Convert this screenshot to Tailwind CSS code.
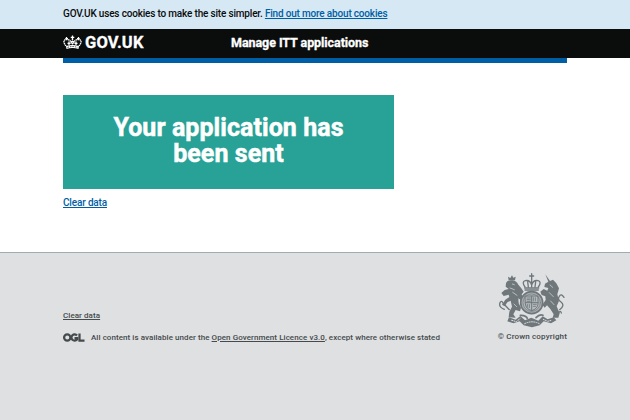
<!DOCTYPE html>
<html lang="en">
<head>
<meta charset="utf-8">
<title>Manage ITT applications</title>
<script src="https://cdn.jsdelivr.net/npm/@tailwindcss/browser@4"></script>
</head>
<body class="bg-white font-['Roboto','Liberation_Sans',sans-serif] text-[#0b0c0c] h-[420px] overflow-hidden flex flex-col">
<div class="h-[29px] shrink-0 bg-[#d5e8f3] px-[63px] pt-[6px] text-[10px] leading-[15px] font-medium whitespace-nowrap">
<span class="tracking-[-0.18px]">GOV.UK uses cookies to make the site simpler. <a class="text-[#005ea5] underline" href="#">Find out more about cookies</a></span>
</div>
<header class="h-[29px] shrink-0 bg-[#0b0c0c] px-[63px] pb-[2px] flex items-center text-white whitespace-nowrap">
<div class="w-[168px] flex items-center gap-[3px]">
<svg class="w-[19px] h-[16px]" viewBox="0 0 38 32" fill="none" stroke="#fff">
<path d="M7 28Q19 24 31 28L32 22Q19 18 6 22Z" fill="#fff" stroke="none"/>
<path d="M9 25Q19 21 29 25" stroke="#0b0c0c" stroke-width="1.5" stroke-dasharray="3 2"/>
<path d="M6 22L2 16Q1 9 7 9Q15 9 17 17M32 22L36 16Q37 9 31 9Q23 9 21 17M19 7V20" stroke-width="2.7" stroke-dasharray="3 1"/>
<path d="M19 1V9M15.500 4.500H22.500M7 4V10M4.500 7H10M31 4V10M28 7H33.500M12 13V20M9 16.500H15M26 13V20M23 16.500H29M16 13H22" stroke-width="2.500"/>
</svg>
<span class="text-[16.5px] leading-[20px] font-bold tracking-[0.15px] [-webkit-text-stroke:0.3px_white]">GOV.UK</span>
</div>
<span class="text-[12.5px] leading-[20px] font-bold tracking-[-0.06px] [-webkit-text-stroke:0.3px_white]">Manage ITT applications</span>
</header>
<div class="mx-[63px] h-[5px] shrink-0 bg-[#005ea5]"></div>
<main class="px-[63px] pt-[31.5px] h-[189px] shrink-0">
<div class="w-[331px] h-[94.5px] bg-[#28a197] pt-[20px] text-center text-white">
<h1 class="text-[25px] leading-[26px] font-bold tracking-[0.06px] [-webkit-text-stroke:0.5px_white]">Your application has<br>been sent</h1>
</div>
<a class="inline-block mt-[6px] text-[10px] leading-[15px] font-medium tracking-[-0.16px] text-[#005ea5] underline" href="#">Clear data</a>
</main>
<footer class="grow bg-[#dee0e2] border-t border-[#a1acb2] px-[63px] pt-[20px] flex justify-between text-[#454a4c] text-[8px] leading-[10px] font-medium whitespace-nowrap">
<div class="pt-[38px]">
<a class="block underline tracking-[0.06px]" href="#">Clear data</a>
<div class="mt-[11px] flex items-center gap-[6px]">
<svg class="w-[22px] h-[9px]" viewBox="0 0 44 18" fill="none" stroke="#454a4c" stroke-width="4.5"><circle cx="8.5" cy="9" r="6.3"/><path d="M28 5A6.3 6.3 0 1 0 28 13V10H23M33 1V15H43"/></svg>
<span class="pt-px tracking-[0.065px]">All content is available under the <a class="underline" href="#">Open Government Licence v3.0</a>, except where otherwise stated</span>
</div>
</div>
<div class="flex flex-col items-end">
<svg class="w-[69px] h-[55px]" viewBox="24 24 207 165" fill="none" stroke="#6f777b" stroke-linecap="round" stroke-linejoin="round">
<g fill="#6f777b" stroke="none">
<path d="M56 46L54 35L61 39L66 31L70 38L77 35L75 46Z"/>
<path d="M48 54Q53 44 68 46Q80 48 85 59L94 70L101 80L95 88L98 99L93 106L85 100L86 115L93 128L90 139L77 135L70 148L77 158L56 157L58 140L66 125L62 107L52 112L44 124L36 119L46 104L58 96L56 89L41 93L34 84L44 75L56 72L47 65Z"/>
<path d="M166 28L180 48L189 44L199 55L207 70L202 88L207 108L200 124L209 145L205 158L188 158L191 148L181 132L171 121L164 128L157 119L167 105L166 94L155 90L151 80L161 72L172 77L175 69L163 66L165 56L175 50Z"/>
<path d="M57 157L77 164L91 153L105 166L124 158L145 167L158 154L173 163L191 157L199 166L183 175L161 169L149 181L126 187L101 181L89 169L70 175L52 169Z"/>
</g>
<path d="M43 133Q25 126 30 113Q34 105 39 114Q48 124 58 134M209 134Q226 121 213 111Q201 103 208 94Q213 84 222 97M205 145Q211 134 214 144" stroke-width="4"/>
<path d="M125 26V46M119 33H131M105 66Q94 50 106 47Q120 44 125 60Q130 44 144 47Q156 50 145 66M125 48V66M113 50L115 66M137 50L135 66" stroke-width="4"/>
<path d="M104 69H146M105 75H145" stroke-width="4"/>
<circle cx="125" cy="113" r="33" fill="#a7adb0" stroke-width="5"/>
<circle cx="125" cy="113" r="26" fill="#b5babd" stroke-width="2"/>
<path d="M106 93H144V118Q142 132 125 137Q108 132 106 118ZM125 93V136M106 113H144" stroke-width="3"/>
<path d="M111 99H121M111 104H121M111 109H121M130 98V108M136 98V108M112 118V126M118 118V128M130 118H139M130 124H137" stroke-width="2.5"/>
<path d="M67 57L73 59M60 69L73 74M68 82L81 91M72 117L80 125M180 60L188 67M178 83L190 95M182 108L192 119" stroke="#dee0e2" stroke-width="2"/>
<path d="M65 166L79 170L90 161M160 163L173 169L185 166M104 176Q126 165 148 176" stroke="#dee0e2" stroke-width="3" stroke-dasharray="3 4"/>
<path d="M91 151Q108 150 112 160M138 158Q149 146 159 151" stroke-width="5"/>
</svg>
<span class="mt-[4px] tracking-[0.15px]">© Crown copyright</span>
</div>
</footer>
</body>
</html>
